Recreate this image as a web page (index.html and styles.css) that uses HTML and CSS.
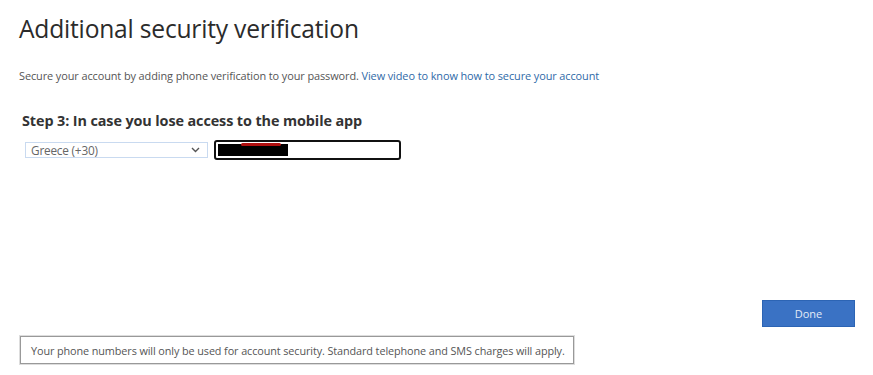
FILE: index.html
```html
<!DOCTYPE html>
<html lang="en">
<head>
<meta charset="utf-8">
<title>Additional security verification</title>
<link rel="stylesheet" href="styles.css">
</head>
<body>
<div class="page">
  <h1 class="title">Additional security verification</h1>
  <p class="intro">Secure your account by adding phone verification to your password. <a class="link" href="#">View video to know how to secure your account</a></p>
  <h2 class="step">Step 3: In case you lose access to the mobile app</h2>
  <div class="fields">
    <div class="select">
      <span class="select-text">Greece (+30)</span>
      <svg class="chev" width="9" height="6" viewBox="0 0 9 6"><path d="M1 1l3.5 3.5L8 1" fill="none" stroke="#555" stroke-width="1.4"/></svg>
    </div>
    <div class="phone">
      <span class="redact"></span>
      <span class="redact-red"></span>
    </div>
  </div>
  <div class="actions">
    <button class="done">Done</button>
  </div>
  <div class="notice">Your phone numbers will only be used for account security. Standard telephone and SMS charges will apply.</div>
</div>
</body>
</html>
```
FILE: styles.css
```css
html, body {
  margin: 0;
  padding: 0;
  background: #fff;
}
body {
  font-family: "Open Sans", "Noto Sans", "DejaVu Sans", sans-serif;
  color: #333;
  width: 873px;
  height: 375px;
  overflow: hidden;
}
.page {
  padding: 13px 18px 0 19px;
  display: flex;
  flex-direction: column;
}
.title {
  margin: 0;
  font-weight: 400;
  font-size: 24.6px;
  line-height: 32px;
  color: #2b2b2b;
  letter-spacing: -0.2px;
}
.intro {
  margin: 24px 0 0 0;
  font-size: 10.95px;
  line-height: 14px;
  color: #555;
  letter-spacing: -0.1px;
  white-space: nowrap;
}
.link {
  color: #2f6aa8;
  text-decoration: none;
}
.step {
  margin: 28px 0 0 3px;
  font-size: 14.4px;
  font-weight: 700;
  line-height: 20px;
  color: #333;
  letter-spacing: -0.1px;
}
.fields {
  margin: 9px 0 0 6px;
  display: flex;
  align-items: center;
  gap: 6px;
}
.select {
  height: 16px;
  border: 1px solid #c9daf0;
  display: flex;
  align-items: center;
  justify-content: space-between;
  padding: 0 7px 0 5px;
  box-sizing: border-box;
  width: 183px;
}
.select-text {
  font-size: 11.8px;
  color: #666;
  letter-spacing: -0.2px;
}
.chev {
  display: block;
}
.phone {
  position: relative;
  width: 183px;
  height: 16px;
  border: 2px solid #111;
  border-radius: 3px;
  background: #fff;
}
.redact {
  position: absolute;
  left: 2px;
  top: 2px;
  width: 70px;
  height: 12px;
  background: #000;
}
.redact-red {
  position: absolute;
  left: 25px;
  top: 1px;
  width: 40px;
  height: 3px;
  background: #b01010;
  border-radius: 2px;
}
.actions {
  margin-top: 140px;
  display: flex;
  justify-content: flex-end;
}
.done {
  width: 93px;
  height: 27px;
  background: #3a72c4;
  border: 1px solid #2c64b4;
  color: #e3ebf7;
  font-family: inherit;
  font-size: 11px;
  padding: 0;
}
.notice {
  margin: 9px 0 0 1px;
  width: 542px;
  height: 26px;
  border: 1px solid #999;
  box-shadow: 0 0 0 1px #ddd;
  display: flex;
  align-items: center;
  padding-left: 10px;
  box-sizing: content-box;
  font-size: 10.85px;
  color: #555;
  letter-spacing: -0.1px;
  white-space: nowrap;
}
```
